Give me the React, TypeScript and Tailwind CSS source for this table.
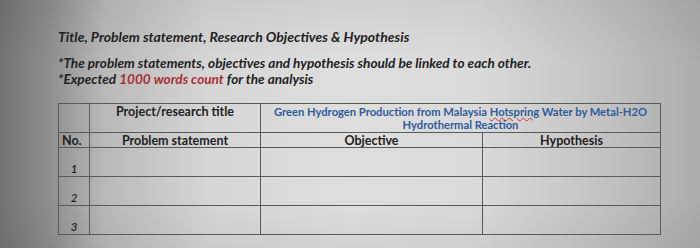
import React from 'react';

const rows = ['1', '2', '3'];

export default function App() {
    return (
        <div
            className="relative w-[700px] h-[248px] overflow-hidden bg-[linear-gradient(to_right,#737373_0%,#8e8e8e_7%,#b9b9b9_15%,#d6d6d6_30%,#dedede_50%,#dadada_68%,#c4c4c4_85%,#acacac_100%)] text-[#222]"
            style={{ fontFamily: 'Lato, "Open Sans", sans-serif' }}
        >
            {/* photo vignette */}
            <div className="absolute inset-0 bg-[linear-gradient(to_bottom,rgba(0,0,0,0.06)_0%,rgba(0,0,0,0)_25%,rgba(0,0,0,0)_80%,rgba(0,0,0,0.05)_100%)]" />

            <div className="relative pl-[58px] pt-[28px]">
                <p className="text-[14px] font-bold italic leading-[17px]">
                    Title, Problem statement, Research Objectives &amp; Hypothesis
                </p>

                <div className="mt-[10px] text-[13.6px] font-bold italic leading-[16px]">
                    <p>*The problem statements, objectives and hypothesis should be linked to each other.</p>
                    <p>
                        *Expected <span className="text-[#a82f38]">1000 words count</span> for the analysis
                    </p>
                </div>

                <table className="mt-[16px] border-collapse text-[12.5px] font-bold leading-[13px]">
                    <colgroup>
                        <col className="w-[31px]" />
                        <col className="w-[171px]" />
                        <col className="w-[222px]" />
                        <col className="w-[178px]" />
                    </colgroup>
                    <tbody>
                        <tr className="h-[29px]">
                            <td className="border border-[#5a5a5a] p-0" />
                            <td className="border border-[#5a5a5a] p-0 text-center align-top pt-[1px]">Project/research title</td>
                            <td colSpan={2} className="border border-[#5a5a5a] p-0 text-center align-top pt-[1px] text-[11.2px] text-[#2d5b9b]">
                                Green Hydrogen Production from Malaysia{' '}
                                <span className="underline decoration-wavy decoration-[#c0393b] decoration-1">Hotspring</span>{' '}
                                Water by Metal-H2O
                                <br />
                                Hydrothermal Reaction
                            </td>
                        </tr>
                        <tr className="h-[15px]">
                            <td className="border border-[#5a5a5a] p-0 pl-[3px]">No.</td>
                            <td className="border border-[#5a5a5a] p-0 text-center">Problem statement</td>
                            <td className="border border-[#5a5a5a] p-0 text-center">Objective</td>
                            <td className="border border-[#5a5a5a] p-0 text-center">Hypothesis</td>
                        </tr>
                        {rows.map((n) => (
                            <tr key={n} className="h-[29px]">
                                <td className="border border-[#5a5a5a] p-0 text-center align-bottom italic font-semibold text-[11.5px] pb-[1px]">{n}</td>
                                <td className="border border-[#5a5a5a] p-0" />
                                <td className="border border-[#5a5a5a] p-0" />
                                <td className="border border-[#5a5a5a] p-0" />
                            </tr>
                        ))}
                    </tbody>
                </table>
            </div>
        </div>
    );
}
